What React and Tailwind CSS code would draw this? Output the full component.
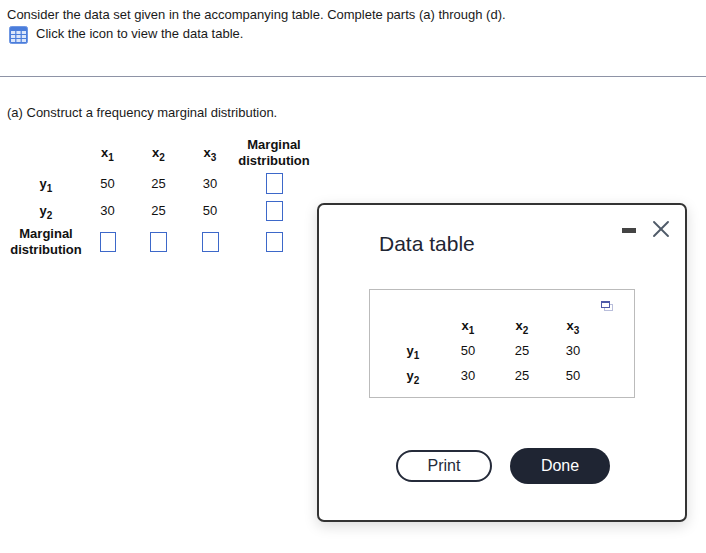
import React from 'react';
import { X } from 'lucide-react';

const font = 'font-["Liberation_Sans",Arial,sans-serif]';

function TableIcon() {
  return (
    <svg width="19" height="18" viewBox="0 0 19 18" className="shrink-0">
      <rect x="0.5" y="0.5" width="18" height="17" rx="2" fill="#4a7ddb" stroke="#6f97e3" />
      <rect x="2" y="5" width="4.2" height="3" fill="#dbe6fa" />
      <rect x="7.4" y="5" width="4.2" height="3" fill="#dbe6fa" />
      <rect x="12.8" y="5" width="4.2" height="3" fill="#dbe6fa" />
      <rect x="2" y="9" width="4.2" height="3" fill="#dbe6fa" />
      <rect x="7.4" y="9" width="4.2" height="3" fill="#dbe6fa" />
      <rect x="12.8" y="9" width="4.2" height="3" fill="#dbe6fa" />
      <rect x="2" y="13" width="4.2" height="3" fill="#dbe6fa" />
      <rect x="7.4" y="13" width="4.2" height="3" fill="#dbe6fa" />
      <rect x="12.8" y="13" width="4.2" height="3" fill="#dbe6fa" />
    </svg>
  );
}

function Var({ name, n }) {
  return (
    <span className="font-bold">
      {name}
      <sub className="bottom-[-4px] text-[10px]">{n}</sub>
    </span>
  );
}

function Box({ className = '' }) {
  return <div className={`border-[1.5px] border-[#3d68c9] bg-white ${className}`} />;
}

function MainTable() {
  return (
    <div className="grid grid-cols-[72px_51px_51px_52px_76px] grid-rows-[35px_27px_27px_36px] ml-[10px] mt-[12px] text-[13px] leading-[16px] text-[#111]">
      <div />
      <div className="flex items-center justify-center"><Var name="x" n="1" /></div>
      <div className="flex items-center justify-center"><Var name="x" n="2" /></div>
      <div className="flex items-center justify-center"><Var name="x" n="3" /></div>
      <div className="flex items-center justify-center text-center font-bold">Marginal<br />distribution</div>

      <div className="flex items-center justify-center"><Var name="y" n="1" /></div>
      <div className="flex items-center justify-center">50</div>
      <div className="flex items-center justify-center">25</div>
      <div className="flex items-center justify-center">30</div>
      <div className="flex items-center justify-center"><Box className="w-[17px] h-[21px]" /></div>

      <div className="flex items-center justify-center"><Var name="y" n="2" /></div>
      <div className="flex items-center justify-center">30</div>
      <div className="flex items-center justify-center">25</div>
      <div className="flex items-center justify-center">50</div>
      <div className="flex items-center justify-center"><Box className="w-[17px] h-[20px]" /></div>

      <div className="flex items-center justify-center text-center font-bold">Marginal<br />distribution</div>
      <div className="flex items-center justify-center"><Box className="w-[16px] h-[20px]" /></div>
      <div className="flex items-center justify-center"><Box className="w-[17px] h-[20px]" /></div>
      <div className="flex items-center justify-center"><Box className="w-[17px] h-[20px]" /></div>
      <div className="flex items-center justify-center"><Box className="w-[17px] h-[20px]" /></div>
    </div>
  );
}

function DataModal() {
  return (
    <div className="absolute left-[317px] top-[203px] w-[370px] h-[319px] bg-white border-2 border-[#333] rounded-[7px] shadow-[0_4px_14px_rgba(0,0,0,0.15)] flex flex-col">
      <div className="flex items-start justify-between pl-[60px] pr-[10px] pt-[10px]">
        <h2 className="text-[21px] leading-[28px] mt-[15px] text-[#1f2533]">Data table</h2>
        <div className="flex items-center gap-[11px]">
          <div className="w-[14px] h-[5px] bg-[#444] mt-[3px]" />
          <X size={28} strokeWidth={1.6} className="text-[#4f5a68]" />
        </div>
      </div>
      <div className="relative mx-[50px] mt-[31px] w-[266px] h-[109px] border border-[#bbb] text-[13px] leading-[16px] text-[#111]">
        <svg width="12" height="10" viewBox="0 0 12 10" className="absolute right-[21px] top-[11px]">
          <rect x="3.5" y="3.5" width="8" height="6" fill="white" stroke="#b9bedb" />
          <rect x="0.5" y="0.5" width="8" height="6" fill="white" stroke="#4f5aa8" />
          <rect x="0.5" y="0.5" width="8" height="1.5" fill="#4f5aa8" />
        </svg>
        <div className="grid grid-cols-[56px_54px_54px_48px] grid-rows-[25px_25px_25px] ml-[15px] mt-[23px]">
          <div />
          <div className="flex items-center justify-center"><Var name="x" n="1" /></div>
          <div className="flex items-center justify-center"><Var name="x" n="2" /></div>
          <div className="flex items-center justify-center"><Var name="x" n="3" /></div>
          <div className="flex items-center justify-center"><Var name="y" n="1" /></div>
          <div className="flex items-center justify-center">50</div>
          <div className="flex items-center justify-center">25</div>
          <div className="flex items-center justify-center">30</div>
          <div className="flex items-center justify-center"><Var name="y" n="2" /></div>
          <div className="flex items-center justify-center">30</div>
          <div className="flex items-center justify-center">25</div>
          <div className="flex items-center justify-center">50</div>
        </div>
      </div>
      <div className="flex items-center gap-[18px] pl-[77px] mt-[50px]">
        <button className="w-[96px] h-[32px] rounded-full border-2 border-[#252b3a] bg-white text-[16px] text-[#252b3a]">Print</button>
        <button className="w-[100px] h-[36px] rounded-full bg-[#1f2533] text-[16px] text-white">Done</button>
      </div>
    </div>
  );
}

export default function App() {
  return (
    <div className={`relative w-[706px] h-[553px] bg-white overflow-hidden ${font}`}>
      <div className="px-[7px] pt-[5px] text-[13px] leading-[20px] text-[#1a1a1a]">
        <p>Consider the data set given in the accompanying table. Complete parts (a) through (d).</p>
        <div className="flex items-center gap-[8px] ml-[2px] mt-[1px]">
          <TableIcon />
          <p className="-mt-[3px]">Click the icon to view the data table.</p>
        </div>
      </div>
      <div className="mt-[32px] border-t border-[#8e93a6]" />
      <p className="ml-[7px] mt-[26px] text-[13px] leading-[20px] text-[#1a1a1a]">(a) Construct a frequency marginal distribution.</p>
      <MainTable />
      <DataModal />
    </div>
  );
}
